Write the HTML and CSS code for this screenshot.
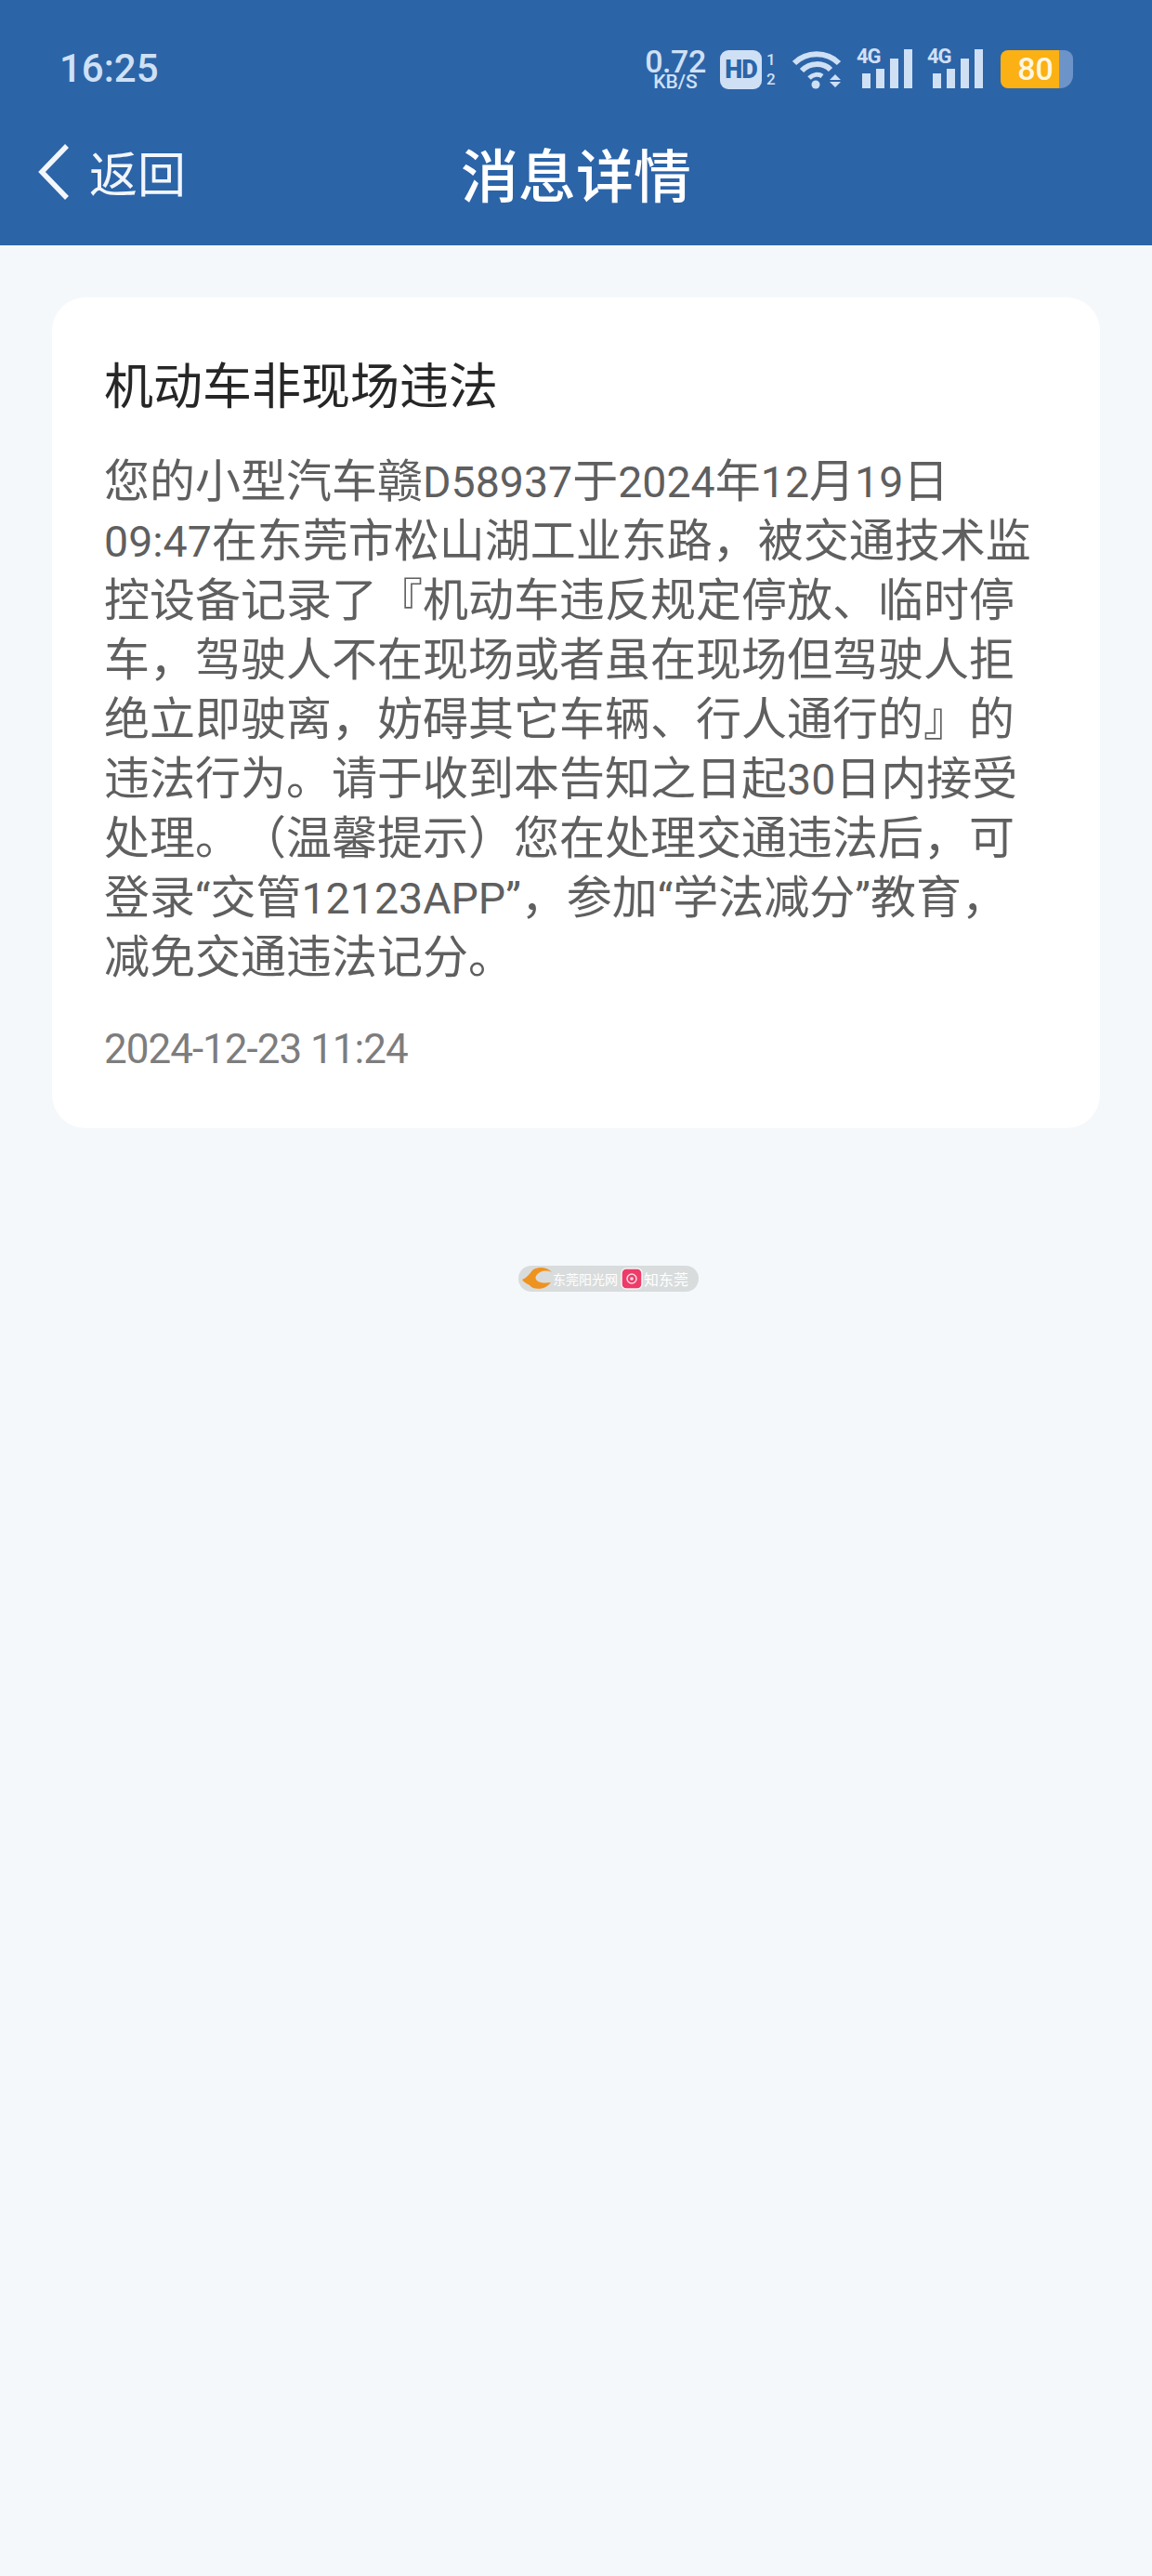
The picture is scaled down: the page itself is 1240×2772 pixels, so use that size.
FILE: index.html
```html
<!DOCTYPE html>
<html lang="zh-CN">
<head>
<meta charset="utf-8">
<title>消息详情</title>
<link rel="stylesheet" href="styles.css">
</head>
<body>
<header class="header">
  <div class="status">
    <span class="clock">16:25</span>
    <div class="status-icons">
      <div class="speed"><span class="speed-num">0.72</span><span class="speed-unit">KB/S</span></div>
      <div class="hd"><span class="hd-box">HD</span><span class="hd-nums"><span>1</span><span>2</span></span></div>
      <svg class="wifi" width="54" height="44" viewBox="0 0 54 44">
        <path d="M2 15C15 2 37 2 50 15" fill="none" stroke="#cfe0f5" stroke-width="6"/>
        <path d="M10 23C19 14 33 14 41 22" fill="none" stroke="#cfe0f5" stroke-width="6"/>
        <path d="M18 31C22 27 28 26 32 29" fill="none" stroke="#cfe0f5" stroke-width="5"/>
        <circle cx="25" cy="38" r="4.5" fill="#cfe0f5"/>
        <path d="M40 33h12l-6-6zM40 35h12l-6 6z" fill="#cfe0f5"/>
      </svg>
      <div class="signal"><span class="sig-label">4G</span><svg width="58" height="42" viewBox="0 0 58 42"><rect x="2" y="26" width="9" height="16" fill="#cfe0f5"/><rect x="17" y="21" width="9" height="21" fill="#cfe0f5"/><rect x="32" y="10" width="9" height="32" fill="#cfe0f5"/><rect x="47" y="0" width="9" height="42" fill="#cfe0f5"/></svg></div>
      <div class="signal"><span class="sig-label">4G</span><svg width="58" height="42" viewBox="0 0 58 42"><rect x="2" y="26" width="9" height="16" fill="#cfe0f5"/><rect x="17" y="21" width="9" height="21" fill="#cfe0f5"/><rect x="32" y="10" width="9" height="32" fill="#cfe0f5"/><rect x="47" y="0" width="9" height="42" fill="#cfe0f5"/></svg></div>
      <div class="battery"><span class="bat-fill">80</span><span class="bat-rest"></span></div>
    </div>
  </div>
  <div class="nav">
    <div class="back">
      <svg width="36" height="62" viewBox="0 0 36 62"><path d="M32 3L5 31L32 59" fill="none" stroke="#f2f6fb" stroke-width="5.5"/></svg>
      <span class="back-text">返回</span>
    </div>
    <h1 class="nav-title">消息详情</h1>
  </div>
</header>
<main class="main">
  <article class="card">
    <h2 class="card-title">机动车非现场违法</h2>
    <p class="card-body">您的小型汽车赣<span class="num">D58937</span>于<span class="num">2024</span>年<span class="num">12</span>月<span class="num">19</span>日<br><span class="num">09:47</span>在东莞市松山湖工业东路，被交通技术监<br>控设备记录了『机动车违反规定停放、临时停<br>车，驾驶人不在现场或者虽在现场但驾驶人拒<br>绝立即驶离，妨碍其它车辆、行人通行的』的<br>违法行为。请于收到本告知之日起<span class="num">30</span>日内接受<br>处理。（温馨提示）您在处理交通违法后，可<br>登录<span class="num">“</span>交管<span class="num">12123APP”</span>，参加<span class="num">“</span>学法减分<span class="num">”</span>教育，<br>减免交通违法记分。</p>
    <time class="card-time">2024-12-23 11:24</time>
  </article>
  <div class="watermark">
    <svg class="wm-logo" width="32" height="26" viewBox="0 0 32 26"><path d="M0 14C5 12 8 8 11 4C18 -1 27 1 32 6C25 3 18 5 15 10C13 14 17 19 31 17C25 25 13 26 8 20C5 18 2 17 0 14Z" fill="#ee9320"/></svg>
    <span class="wm-text">东莞阳光网</span>
    <svg class="wm-badge" width="24" height="24" viewBox="0 0 24 24"><rect x="1" y="1" width="22" height="22" rx="5" fill="#ee3b6a" stroke="#f3f5f6" stroke-width="1.5"/><circle cx="12" cy="12" r="5" fill="none" stroke="#fbdbe4" stroke-width="1.5"/><circle cx="12" cy="12" r="1.8" fill="#fbdbe4"/></svg>
    <span class="wm-text wm-text-b">知东莞</span>
  </div>
</main>
</body>
</html>
```
FILE: styles.css
```css
* { box-sizing: border-box; }
html, body { margin: 0; padding: 0; }
body {
  width: 1240px;
  min-height: 2772px;
  background: #f5f8fa;
  font-family: "Noto Sans CJK SC", "Noto Sans", sans-serif;
}
.header {
  height: 264px;
  background: #2c64a8;
  display: flex;
  flex-direction: column;
}
.status {
  height: 104px;
  padding: 53px 85px 0 64px;
  display: flex;
  justify-content: space-between;
  align-items: flex-start;
}
.clock {
  font: 500 42px/58px Roboto, sans-serif;
  color: #cfe0f5;
  margin-top: -8px;
}
.status-icons {
  display: flex;
  align-items: flex-start;
  color: #cfe0f5;
  font-family: Roboto, sans-serif;
}
.speed {
  width: 64px;
  margin-right: 16px;
  display: flex;
  flex-direction: column;
  align-items: center;
  font-weight: 500;
}
.speed-num { font-size: 34px; line-height: 27px; letter-spacing: -0.5px; }
.speed-unit { font-size: 21px; line-height: 16px; }
.hd { display: flex; width: 60px; margin: 1px 18px 0 0; }
.hd-box {
  width: 45px;
  height: 42px;
  background: #cfe0f5;
  color: #2c64a8;
  border-radius: 9px;
  font: 900 27px/42px Roboto, sans-serif;
  letter-spacing: -1px;
  text-align: center;
}
.hd-nums {
  display: flex;
  flex-direction: column;
  margin-left: 5px;
  font: 500 17px/21px Roboto, sans-serif;
}
.wifi { margin: 0 15px 0 0; }
.signal { position: relative; width: 62px; margin: 0 14px 0 0; }
.signal svg { display: block; margin-left: 4px; }
.sig-label {
  position: absolute;
  left: 0;
  top: -3px;
  font: 700 22px/22px Roboto, sans-serif;
  letter-spacing: -1px;
}
.battery { display: flex; margin: 1px 0 0 3px; height: 41px; }
.bat-fill {
  width: 63px;
  height: 41px;
  padding-left: 12px;
  background: #fbb014;
  border-radius: 8px 0 0 8px;
  color: #fff7e2;
  font: 500 34px/41px Roboto, sans-serif;
  text-align: center;
}
.bat-rest {
  width: 15px;
  height: 41px;
  background: #6c94c9;
  border-radius: 0 9px 14px 0;
}
.nav {
  position: relative;
  flex: 1;
  display: flex;
  align-items: center;
  justify-content: center;
  padding-top: 4px;
}
.back {
  position: absolute;
  left: 40px;
  top: 50px;
  display: flex;
  align-items: center;
  gap: 20px;
}
.back svg { display: block; }
.back-text { font-size: 52px; line-height: 62px; color: #f2f6fb; }
.nav-title {
  margin: 0;
  font-size: 62px;
  font-weight: 500;
  line-height: 80px;
  color: #fff;
}
.main {
  padding: 56px 56px 0;
  display: flex;
  flex-direction: column;
  align-items: flex-start;
}
.card {
  width: 1128px;
  height: 894px;
  padding: 56px 56px 0;
  background: #fff;
  border-radius: 36px;
}
.card-title {
  margin: 0;
  font-size: 53px;
  font-weight: 400;
  line-height: 72px;
  color: #262626;
}
.card-body {
  margin: 34px 0 0;
  font-size: 49px;
  line-height: 64px;
  color: #5f5f5f;
  white-space: nowrap;
  text-spacing-trim: space-all;
}
.num {
  font-family: Roboto, sans-serif;
  font-size: 46.5px;
  line-height: 1;
}
.card-time {
  display: block;
  margin-top: 41px;
  font: 400 44px/60px Roboto, sans-serif;
  letter-spacing: -1px;
  color: #7d7d7d;
}
.watermark {
  margin: 148px 0 0 502px;
  width: 194px;
  height: 28px;
  border-radius: 14px;
  background: #d9dcdd;
  display: flex;
  align-items: center;
  padding-left: 4px;
  gap: 1px;
}
.wm-logo { flex: none; }
.wm-text {
  width: 70px;
  font-size: 14px;
  line-height: 18px;
  color: #fff;
  white-space: nowrap;
}
.wm-text-b { font-size: 16px; width: 50px; }
.wm-badge { flex: none; margin-left: 2px; }
```
